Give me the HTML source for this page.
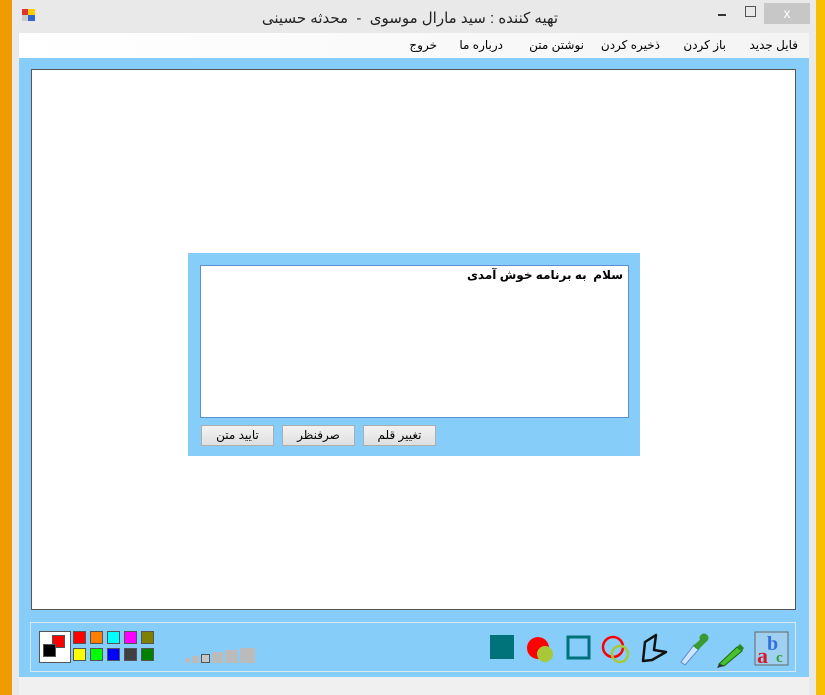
<!DOCTYPE html>
<html><head><meta charset="utf-8"><style>
body{margin:0;width:825px;height:695px;overflow:hidden;background:#f5a800;font-family:"Liberation Sans","DejaVu Sans",sans-serif;position:relative}
.a{position:absolute}
.sw{position:absolute;width:13px;height:13px;border:1px solid #555;box-sizing:border-box}
.btn{position:absolute;top:425px;width:73px;height:21px;border:1px solid #adadad;background:linear-gradient(#f2f2f2,#e0e0e0);box-sizing:border-box;font-size:12px;text-align:center;line-height:19px;direction:rtl}
.m{position:absolute;top:38px;font-size:12px;direction:rtl;color:#000}
</style></head><body>
<div class="a" style="left:0;top:0;width:12px;height:695px;background:#f09c00"></div>
<div class="a" style="left:815px;top:0;width:10px;height:695px;background:#f8c000"></div>
<div class="a" style="left:12px;top:0;width:804px;height:695px;background:#e9e9e9"></div>
<div class="a" style="left:22px;top:9px;width:13px;height:12px">
<div class="a" style="left:0;top:0;width:6px;height:6px;background:#d33"></div><div class="a" style="left:6px;top:0;width:7px;height:6px;background:#fc0"></div><div class="a" style="left:0;top:6px;width:6px;height:6px;background:#ccc"></div><div class="a" style="left:6px;top:6px;width:7px;height:6px;background:#36c"></div></div>
<div class="a" style="left:200px;top:9px;width:420px;text-align:center;font-size:15px;color:#222;direction:rtl">تهیه کننده : سید مارال موسوی&nbsp; - &nbsp;محدثه حسینی</div>
<div class="a" style="left:718px;top:14px;width:8px;height:2px;background:#333"></div>
<div class="a" style="left:745px;top:6px;width:9px;height:9px;border:1px solid #555"></div>
<div class="a" style="left:764px;top:3px;width:46px;height:21px;background:#c7c7c7;color:#fff;text-align:center;font-size:14px;line-height:20px">x</div>
<div class="a" style="left:19px;top:33px;width:790px;height:25px;background:linear-gradient(90deg,#fff,#f4f4f4)"></div>
<div class="m" style="right:27px">فایل جدید</div>
<div class="m" style="right:99px">باز کردن</div>
<div class="m" style="right:165px">ذخیره کردن</div>
<div class="m" style="right:241px">نوشتن متن</div>
<div class="m" style="right:322px">درباره ما</div>
<div class="m" style="right:388px">خروج</div>
<div class="a" style="left:19px;top:58px;width:790px;height:619px;background:#87cdf9"></div>
<div class="a" style="left:31px;top:69px;width:765px;height:541px;background:#fff;border:1px solid #555;box-sizing:border-box"></div>
<div class="a" style="left:188px;top:253px;width:452px;height:203px;background:#87cdf9"></div>
<div class="a" style="left:200px;top:265px;width:429px;height:153px;background:#fff;border:1px solid #5a8fd0;box-sizing:border-box"></div>
<div class="a" style="left:300px;top:268px;width:323px;text-align:right;direction:rtl;font-size:12px;font-weight:bold;letter-spacing:-0.3px">سلام&nbsp; به برنامه خوش آمدی</div>
<div class="btn" style="left:201px">تایید متن</div>
<div class="btn" style="left:282px">صرفنظر</div>
<div class="btn" style="left:363px">تغییر قلم</div>
<div class="a" style="left:30px;top:622px;width:766px;height:50px;border:1px solid #d8e8f0;box-sizing:border-box"></div>
<div class="a" style="left:39px;top:631px;width:32px;height:32px;background:#fff;border:1px solid #555;box-sizing:border-box"></div>
<div class="sw" style="left:52px;top:635px;background:#f00"></div>
<div class="sw" style="left:43px;top:644px;background:#000"></div>
<div class="sw" style="left:73px;top:631px;background:#f00"></div>
<div class="sw" style="left:90px;top:631px;background:#ff8000"></div>
<div class="sw" style="left:107px;top:631px;background:#0ff"></div>
<div class="sw" style="left:124px;top:631px;background:#f0f"></div>
<div class="sw" style="left:141px;top:631px;background:#808000"></div>
<div class="sw" style="left:73px;top:648px;background:#ff0"></div>
<div class="sw" style="left:90px;top:648px;background:#0f0"></div>
<div class="sw" style="left:107px;top:648px;background:#00f"></div>
<div class="sw" style="left:124px;top:648px;background:#404040"></div>
<div class="sw" style="left:141px;top:648px;background:#008000"></div>
<div class="a" style="left:185px;top:658px;width:5px;height:5px;background:#bbb"></div>
<div class="a" style="left:192px;top:656px;width:7px;height:7px;background:#bbb"></div>
<div class="a" style="left:201px;top:654px;width:9px;height:9px;background:#c8c8c8;border:1px solid #555;box-sizing:border-box"></div>
<div class="a" style="left:212px;top:652px;width:11px;height:11px;background:#bbb"></div>
<div class="a" style="left:225px;top:650px;width:13px;height:13px;background:#bbb"></div>
<div class="a" style="left:240px;top:648px;width:15px;height:15px;background:#bbb"></div>
<svg class="a" style="left:480px;top:620px" width="320" height="50">
<rect x="10" y="15" width="24" height="24" fill="#00727a"/>
<circle cx="58" cy="28" r="11" fill="#f00"/><circle cx="65" cy="34" r="8" fill="#a8c838"/>
<rect x="88" y="17" width="21" height="21" fill="none" stroke="#00727a" stroke-width="3"/>
<circle cx="133" cy="27" r="10" fill="none" stroke="#f00" stroke-width="2.5"/><circle cx="140" cy="34" r="8" fill="none" stroke="#a8c838" stroke-width="2.5"/>
<path d="M165 22 L176 15 L174 30 L186 32 L172 40 L163 41 Z" fill="none" stroke="#111" stroke-width="2.5" stroke-linejoin="round"/>
<path d="M201 42 L214 25 L219 29 L205 45 Z" fill="#cde6ff" stroke="#5a8ad0"/><path d="M213 26 L222 18 L226 22 L218 30 Z" fill="#3a9a30"/><circle cx="224" cy="18" r="4.5" fill="#3a9a30"/>
<path d="M239 44 L257 27 L262 31 L244 46 Z" fill="#48c030" stroke="#1a6a10"/><path d="M257 27 L260 24 L264 28 L262 31 Z" fill="#2a8a20"/><path d="M239 44 L244 46 L237 48 Z" fill="#333"/>
<rect x="275" y="12" width="33" height="33" fill="#9fd0f0" stroke="#666"/>
<text x="277" y="43" font-size="22" font-weight="bold" fill="#d02030" font-family="Liberation Serif">a</text>
<text x="287" y="30" font-size="20" font-weight="bold" fill="#3070e0" font-family="Liberation Serif">b</text>
<text x="296" y="42" font-size="15" font-weight="bold" fill="#30a040" font-family="Liberation Serif">c</text>
</svg>
<div class="a" style="left:19px;top:677px;width:790px;height:18px;background:#f0f0f0"></div>
</body></html>
